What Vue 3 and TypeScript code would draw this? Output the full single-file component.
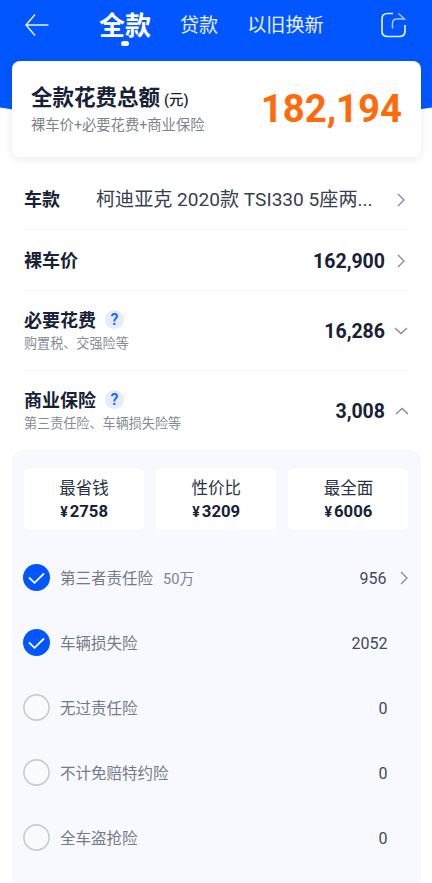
<script setup lang="ts">
interface Plan { name: string; price: number }
interface Cover { name: string; limit?: string; price: number; checked: boolean; link?: boolean }

const plans: Plan[] = [
  { name: '最省钱', price: 2758 },
  { name: '性价比', price: 3209 },
  { name: '最全面', price: 6006 },
]
const covers: Cover[] = [
  { name: '第三者责任险', limit: '50万', price: 956, checked: true, link: true },
  { name: '车辆损失险', price: 2052, checked: true },
  { name: '无过责任险', price: 0, checked: false },
  { name: '不计免赔特约险', price: 0, checked: false },
  { name: '全车盗抢险', price: 0, checked: false },
]
</script>

<template>
  <div class="page">
    <svg class="backdrop" viewBox="0 0 432 130" aria-hidden="true">
      <path d="M0 0H432V107.500Q216 143 0 107.500Z" fill="#0256ff" />
    </svg>

    <header class="nav">
      <svg class="back" viewBox="0 0 26 24"><path d="M11 1.500 2 12 11 22.500M2 12H24.500" /></svg>
      <nav class="tabs">
        <span class="tab active">全款</span>
        <span class="tab">贷款</span>
        <span class="tab">以旧换新</span>
      </nav>
      <svg class="share" viewBox="0 0 28 28">
        <path d="M13 2.500H7.500Q2 2.500 2 8V20Q2 25.500 7.500 25.500H19.500Q25 25.500 25 20V14" />
        <path class="thin" d="M12.500 17.500V12.500Q12.500 8 17 8H24.500L18.500 2.500" />
      </svg>
    </header>

    <section class="total">
      <div>
        <h1 class="total-title">全款花费总额<small>(元)</small></h1>
        <p class="total-sub">裸车价+必要花费+商业保险</p>
      </div>
      <strong class="total-price">182,194</strong>
    </section>

    <section class="rows">
      <div class="row">
        <b class="label">车款</b>
        <span class="model">柯迪亚克 2020款 TSI330 5座两...</span>
        <svg class="arrow" viewBox="0 0 14 14"><path d="M4 1 10 7 4 13" /></svg>
      </div>
      <div class="row">
        <b class="label">裸车价</b>
        <b class="amount">162,900</b>
        <svg class="arrow" viewBox="0 0 14 14"><path d="M4 1 10 7 4 13" /></svg>
      </div>
      <div class="row tall">
        <div>
          <div class="label">必要花费<i class="help">?</i></div>
          <div class="hint">购置税、交强险等</div>
        </div>
        <b class="amount">16,286</b>
        <svg class="arrow" viewBox="0 0 14 14"><path d="M1 4 7 9.500 13 4" /></svg>
      </div>
      <div class="row tall last">
        <div>
          <div class="label">商业保险<i class="help">?</i></div>
          <div class="hint">第三责任险、车辆损失险等</div>
        </div>
        <b class="amount">3,008</b>
        <svg class="arrow" viewBox="0 0 14 14"><path d="M2 10 8 4.500 14 10" /></svg>
      </div>
    </section>

    <section class="panel">
      <div class="plans">
        <div v-for="p in plans" :key="p.name" class="plan">
          <span class="plan-name">{{ p.name }}</span>
          <b class="plan-price"><span class="yen">¥</span>{{ p.price }}</b>
        </div>
      </div>
      <div v-for="c in covers" :key="c.name" class="cover">
        <svg class="check" viewBox="0 0 27 27">
          <template v-if="c.checked">
            <circle cx="13.500" cy="13.500" r="13.500" fill="#0256ff" />
            <path d="M6 13.500 11.500 18.800 21 9.500" fill="none" stroke="#fff" stroke-width="1.800" />
          </template>
          <circle v-else cx="13.500" cy="13.500" r="12.600" fill="#fafbfe" stroke="#c8ccd3" stroke-width="1.600" />
        </svg>
        <span class="cover-name">{{ c.name }}</span>
        <span v-if="c.limit" class="cover-limit">{{ c.limit }}</span>
        <span class="cover-price">{{ c.price }}</span>
        <svg v-if="c.link" class="arrow cover-arrow" viewBox="0 0 14 14"><path d="M4 1 10 7 4 13" /></svg>
      </div>
    </section>
  </div>
</template>

<style>
body { background: #fff; overflow: hidden; }
</style>

<style scoped>
.page {
  position: relative;
  width: 432px;
  height: 883px;
  box-sizing: border-box;
  overflow: hidden;
  display: flex;
  flex-direction: column;
  color: #172237;
  font-family: Roboto, "Noto Sans CJK SC", sans-serif;
  background: #fff;
  white-space: nowrap;
}
.backdrop { position: absolute; top: 0; left: 0; width: 432px; height: 130px; }
.nav, .total { position: relative; }
.nav {
  height: 61px;
  flex: none;
  box-sizing: border-box;
  padding: 0 24px 11px 24px;
  display: flex;
  align-items: center;
}
svg { flex: none; }
.back { width: 26px; height: 24px; fill: none; stroke: #e6efff; stroke-width: 1.500; }
.tabs { display: flex; align-items: center; margin-left: 49px; gap: 29px; }
.tab { font-size: 19.100px; line-height: 30px; color: #e8f0ff; padding-top: 2px; }
.active { position: relative; font-size: 26px; font-weight: 700; color: #fff; }
.active::after {
  content: "";
  position: absolute;
  left: 22px;
  bottom: -5px;
  width: 8px;
  height: 5px;
  border-radius: 3px;
  background: #fff;
}
.share { width: 28px; height: 28px; margin-left: auto; margin-right: 0; fill: none; stroke: #e6efff; stroke-width: 1.700; }
.thin { stroke: #a9c7ff; stroke-width: 1.500; }
.total {
  flex: none;
  height: 96px;
  margin: 0 11px 0 12px;
  padding: 0 19px;
  box-sizing: border-box;
  border-radius: 8px;
  background: #fff;
  box-shadow: 0 2px 8px rgba(20, 30, 60, .09);
  display: flex;
  align-items: center;
  justify-content: space-between;
}
.total-title { margin: 2px 0 0; font-size: 21.500px; line-height: 30px; font-weight: 700; }
.total-title small { font-size: 14.500px; font-weight: 500; margin-left: 4px; }
.total-sub { margin: 0; font-size: 14.300px; line-height: 18px; color: #7d828d; padding-bottom: 4px; }
.total-price { font-size: 38.300px; line-height: 46px; color: #ff6a0a; }
.rows { flex: none; padding: 13px 24px 0; }
.row {
  height: 60px;
  box-sizing: border-box;
  border-bottom: 1px solid #f3f4f6;
  display: flex;
  align-items: center;
}
.row:first-child { padding-top: 1px; }
.row.tall { height: 80px; padding-top: 1px; }
.row:nth-child(2) { height: 61px; padding-top: 1px; }
.row.last { height: 79px; border-bottom: 0; }
.label { font-size: 18px; line-height: 26px; font-weight: 700; display: flex; align-items: center; }
.model { margin-left: 36px; font-size: 19.100px; line-height: 26px; color: #364052; }
.amount { margin-left: auto; font-size: 19.500px; margin-right: -1px; padding-top: 1px; }
.arrow { width: 14px; height: 14px; fill: none; stroke: #858b96; stroke-width: 1.300; }
.row .arrow { margin-left: 10px; }
.row .model + .arrow { margin-left: auto; }
.help {
  width: 19px;
  height: 19px;
  margin-left: 9px;
  margin-bottom: 3px;
  border-radius: 50%;
  background: #e3edff;
  color: #2268f5;
  font-size: 16px;
  line-height: 19px;
  font-style: normal;
  font-weight: 600;
  text-align: center;
}
.hint { font-size: 13.100px; line-height: 20px; color: #858a95; }
.panel {
  flex: 1;
  margin: 0 11.500px 0 12px;
  padding: 18px 12px 0;
  background: #f7f9fe;
  border-radius: 11px 11px 0 0;
}
.plans { display: grid; grid-template-columns: repeat(3, 1fr); gap: 12px; margin-bottom: 15px; }
.plan {
  height: 62px;
  padding-top: 2px;
  box-sizing: border-box;
  border-radius: 5px;
  background: #fff;
  display: flex;
  flex-direction: column;
  align-items: center;
  justify-content: center;
}
.plan-name { font-size: 16.500px; line-height: 23px; color: #283347; }
.plan-price { font-size: 16.700px; line-height: 23px; }
.yen { font-size: 14px; margin-right: 2px; }
.cover { height: 65px; display: flex; align-items: center; }
.check { width: 27px; height: 27px; margin-left: -1px; }
.cover-name { margin-left: 10px; font-size: 15.500px; line-height: 22px; padding-top: 2px; color: #747b88; }
.cover-limit { margin-left: 10px; font-size: 14.600px; line-height: 22px; padding-top: 2px; color: #7c838f; }
.cover-price { margin-left: auto; margin-right: 21px; font-size: 16px; line-height: 22px; padding-top: 2px; color: #414a5b; }
.cover-limit + .cover-price { margin-right: 10px; }
.cover-arrow { margin-right: -2px; }
</style>
